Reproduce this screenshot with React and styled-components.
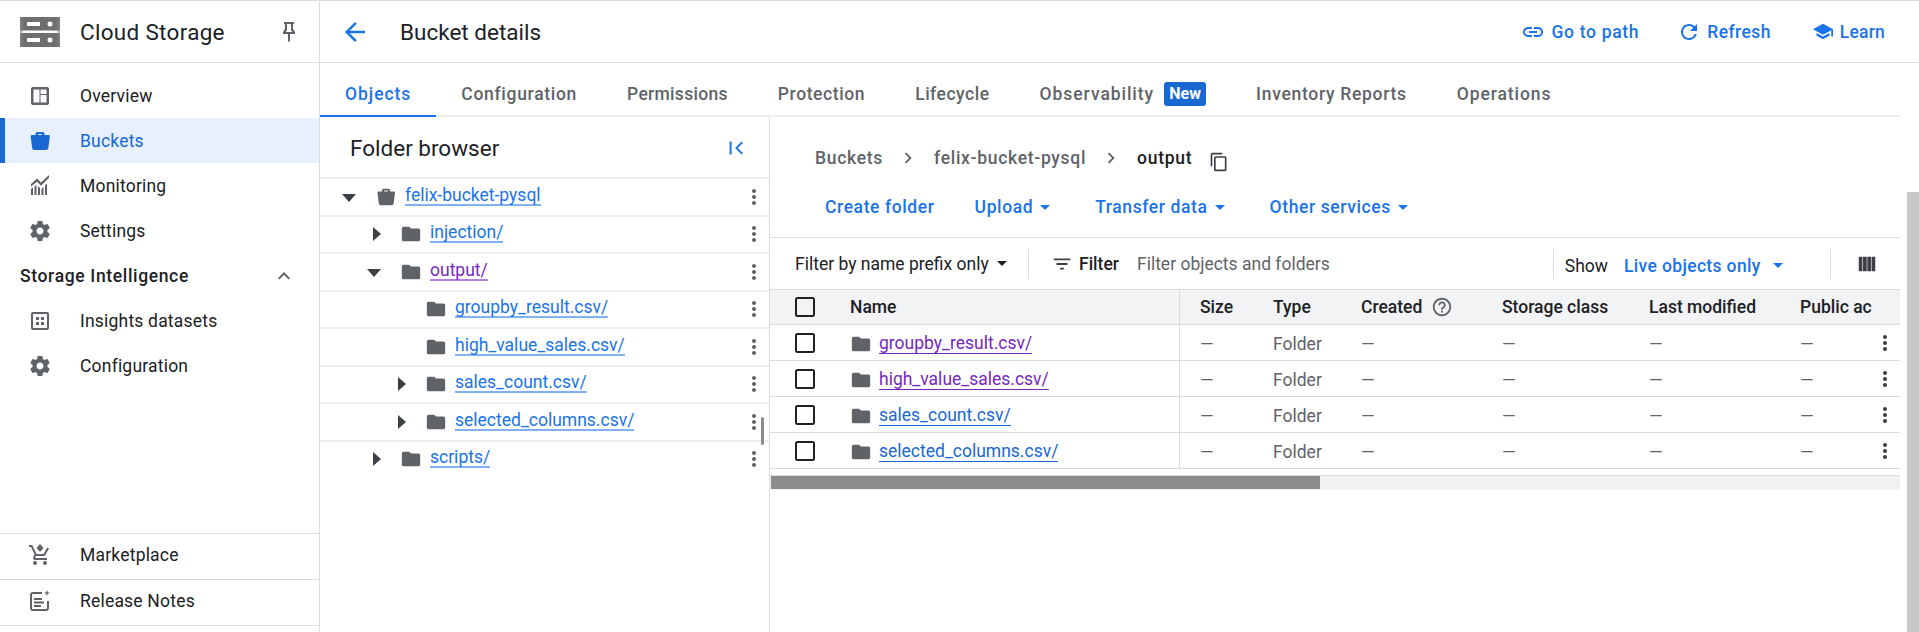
import styled, { createGlobalStyle } from "styled-components";

const GlobalStyle = createGlobalStyle`
html, body { margin: 0; padding: 0; height: 100%; overflow: hidden; background: #fff; }
body { font-family: Roboto, "Liberation Sans", sans-serif; color: #202124; }
* { box-sizing: border-box; }
`;

const BLUE = "#1a73e8";
const GREY = "#5f6368";
const LINE = "#dadce0";

const Icon = ({ d, size = 24, color = "currentColor" }) => (
    <svg width={size} height={size} viewBox="0 0 24 24" fill={color} style={{ flex: "none", display: "block" }}>
        <path d={d} />
    </svg>
);

const paths = {
    dashboard: "M19 3H5c-1.1 0-2 .9-2 2v14c0 1.1.9 2 2 2h14c1.1 0 2-.9 2-2V5c0-1.1-.9-2-2-2zM5.5 18.5v-13h6v13h-6zm7 0V11h6v7.5h-6zm0-8.5V5.5h6V10h-6z",
    bucket: "M7.5 6V5c0-1.1.9-2 2-2h5c1.1 0 2 .9 2 2v1h4c.8 0 1.4.7 1.3 1.5l-1.4 11.2c-.2 1.3-1.2 2.3-2.5 2.3H6.6c-1.3 0-2.3-1-2.5-2.3L2.7 7.5C2.6 6.7 3.2 6 4 6h3.5zm2.5 0h4V5h-4v1z",
    monitoring: "M3 21v-6l2-1.5V21H3zm3.5 0v-8.5l2-1.5v10h-2zm3.5 0v-9l2 2v7h-2zm3.5 0v-6l2-2v8h-2zm3.5 0V11.5l2-2V21h-2zM3 12.5V10l6-5.5 4 4L21 1v2.8l-8 8-4-4-6 4.700z",
    gear: "M19.43 12.98c.04-.32.07-.64.07-.98s-.03-.66-.07-.98l2.11-1.65c.19-.15.24-.42.12-.64l-2-3.46c-.12-.22-.39-.3-.61-.22l-2.49 1c-.52-.4-1.08-.73-1.69-.98l-.38-2.65A.488.488 0 0014 2h-4c-.25 0-.46.18-.49.42l-.38 2.65c-.61.25-1.17.59-1.69.98l-2.49-1c-.23-.09-.49 0-.61.22l-2 3.46c-.13.22-.07.49.12.64l2.11 1.65c-.04.32-.07.65-.07.98s.03.66.07.98l-2.11 1.65c-.19.15-.24.42-.12.64l2 3.46c.12.22.39.3.61.22l2.49-1c.52.4 1.08.73 1.69.98l.38 2.65c.03.24.24.42.49.42h4c.25 0 .46-.18.49-.42l.38-2.65c.61-.25 1.17-.59 1.69-.98l2.49 1c.23.09.49 0 .61-.22l2-3.46c.12-.22.07-.49-.12-.64l-2.11-1.65zM12 15.5c-1.93 0-3.5-1.57-3.5-3.5s1.57-3.5 3.5-3.5 3.5 1.57 3.5 3.5-1.57 3.5-3.5 3.5z",
    insights: "M19 3H5c-1.1 0-2 .9-2 2v14c0 1.1.9 2 2 2h14c1.1 0 2-.9 2-2V5c0-1.1-.9-2-2-2zm0 16H5V5h14v14zM8 8h3v3H8V8zm5 0h3v3h-3V8zm-5 5h3v3H8v-3zm5 0h3v3h-3v-3z",
    cart: "M15.55 13c.75 0 1.41-.41 1.75-1.03L21 5.5l-1.75-1-3.67 6.5H8.53L4.27 2H1v2h2l3.6 7.59-1.35 2.44C4.52 15.37 5.48 17 7 17h12v-2H7l1.1-2h7.45zM7 18a2 2 0 100 4 2 2 0 000-4zm10 0a2 2 0 100 4 2 2 0 000-4zM12 1L8.5 5l3.5 4 3.5-4L12 1z",
    notes: "M19 12v7c0 .6-.4 1-1 1H5c-.6 0-1-.4-1-1V6c0-.6.4-1 1-1h9V3H5C3.3 3 2 4.3 2 6v13c0 1.7 1.3 3 3 3h13c1.7 0 3-1.3 3-3v-7h-2zM6 9h8v2H6V9zm0 3.5h10v2H6v-2zM6 16h7v2H6v-2zM19 1l.8 2.2L22 4l-2.2.8L19 7l-.8-2.2L16 4l2.2-.8L19 1z",
    pin: "M16 9V4h1V2H7v2h1v5l-2 3v2h5v7l1 1 1-1v-7h5v-2l-2-3zm-7.2 3L10 10.2V4h4v6.2l1.2 1.8H8.8z",
    up: "M7.41 15.41L12 10.83l4.59 4.58L18 14l-6-6-6 6z",
    back: "M20 11H7.83l5.59-5.59L12 4l-8 8 8 8 1.41-1.41L7.83 13H20v-2z",
    link: "M3.9 12c0-1.71 1.39-3.1 3.1-3.1h4V7H7c-2.76 0-5 2.24-5 5s2.24 5 5 5h4v-1.9H7c-1.71 0-3.1-1.39-3.1-3.1zM8 13h8v-2H8v2zm9-6h-4v1.9h4c1.71 0 3.1 1.39 3.1 3.1s-1.39 3.1-3.1 3.1h-4V17h4c2.76 0 5-2.24 5-5s-2.24-5-5-5z",
    refresh: "M17.65 6.35A7.958 7.958 0 0012 4c-4.42 0-7.99 3.58-7.99 8s3.57 8 7.99 8c3.73 0 6.84-2.55 7.73-6h-2.08A5.99 5.99 0 0112 18c-3.31 0-6-2.69-6-6s2.69-6 6-6c1.66 0 3.14.69 4.22 1.78L13 11h7V4l-2.35 2.35z",
    school: "M5 13.18v2.81L12 20l7-4.01v-2.81L12 17l-7-3.82zM12 3L1 9l11 6 9-4.91V17h2V9L12 3z",
    collapse: "M5 5h2.2v14H5V5zm14.5 1.5L13.9 12l5.6 5.5-1.5 1.5-7-7 7-7 1.5 1.5z",
    folder: "M10 4H4c-1.1 0-1.99.9-1.99 2L2 18c0 1.1.9 2 2 2h16c1.1 0 2-.9 2-2V8c0-1.1-.9-2-2-2h-8l-2-2z",
    kebab: "M12 8c1.1 0 2-.9 2-2s-.9-2-2-2-2 .9-2 2 .9 2 2 2zm0 2c-1.1 0-2 .9-2 2s.9 2 2 2 2-.9 2-2-.9-2-2-2zm0 6c-1.1 0-2 .9-2 2s.9 2 2 2 2-.9 2-2-.9-2-2-2z",
    chevron: "M10 6L8.59 7.41 13.17 12l-4.58 4.59L10 18l6-6z",
    copy: "M16 1H4c-1.1 0-2 .9-2 2v14h2V3h12V1zm3 4H8c-1.1 0-2 .9-2 2v14c0 1.1.9 2 2 2h11c1.1 0 2-.9 2-2V7c0-1.1-.9-2-2-2zm0 16H8V7h11v14z",
    filter: "M10 18h4v-2h-4v2zM3 6v2h18V6H3zm3 7h12v-2H6v2z",
    columns: "M3 4h4v16H3V4zm4.67 0h4v16h-4V4zm4.66 0h4v16h-4V4zM17 4h4v16h-4V4z",
    help: "M11 18h2v-2h-2v2zm1-16C6.48 2 2 6.48 2 12s4.48 10 10 10 10-4.48 10-10S17.52 2 12 2zm0 18c-4.41 0-8-3.59-8-8s3.59-8 8-8 8 3.59 8 8-3.59 8-8 8zm0-14c-2.21 0-4 1.79-4 4h2c0-1.1.9-2 2-2s2 .9 2 2c0 2-3 1.75-3 5h2c0-2.25 3-2.5 3-5 0-2.21-1.79-4-4-4z",
};

const Page = styled.div`
width: 1919px;
height: 632px;
border-top: 1px solid ${LINE};
display: flex;
overflow: hidden;
position: relative;
`;

const Sidebar = styled.aside`
width: 320px;
flex: none;
border-right: 1px solid ${LINE};
display: flex;
flex-direction: column;
`;

const Brand = styled.div`
height: 62px;
border-bottom: 1px solid ${LINE};
display: flex;
align-items: center;
padding: 0 18px 0 20px;
font-size: 22.5px;
letter-spacing: .3px;
flex: none;
`;

const BrandName = styled.span`
margin-left: 20px;
flex: 1;
`;

const PinButton = styled.span`
color: ${GREY};
display: flex;
`;

const Nav = styled.nav`
padding-top: 10px;
flex: 1;
`;

const NavItem = styled.div`
height: 45px;
display: flex;
align-items: center;
padding-left: ${p => (p.$active ? "23px" : "28px")};
border-left: ${p => (p.$active ? "5px solid #1967d2" : "none")};
background: ${p => (p.$active ? "#e8f0fe" : "transparent")};
color: ${p => (p.$active ? "#1967d2" : "#202124")};
font-size: 17.5px;
letter-spacing: .2px;
svg { color: ${p => (p.$active ? "#1967d2" : GREY)}; margin-right: 28px; }
`;

const NavGroup = styled.div`
height: 45px;
display: flex;
align-items: center;
justify-content: space-between;
padding: 0 23px 0 20px;
font-size: 17.5px;
font-weight: 500;
letter-spacing: .65px;
svg { color: ${GREY}; }
`;

const FooterItem = styled(NavItem)`
height: 46px;
padding-bottom: 4px;
border-top: 1px solid ${LINE};
flex: none;
`;

const FooterEnd = styled.div`
height: 7px;
border-top: 1px solid ${LINE};
flex: none;
`;

const Main = styled.main`
flex: 1;
min-width: 0;
display: flex;
flex-direction: column;
`;

const TopBar = styled.header`
height: 62px;
flex: none;
border-bottom: 1px solid ${LINE};
display: flex;
align-items: center;
padding: 0 34px 0 20px;
`;

const BackButton = styled.span`
color: ${BLUE};
display: flex;
margin-right: 30px;
`;

const PageTitle = styled.h1`
margin: 0;
font-size: 22.5px;
font-weight: 400;
flex: 1;
`;

const TopAction = styled.span`
display: flex;
align-items: center;
gap: 6px;
color: ${BLUE};
font-size: 17.5px;
font-weight: 500;
letter-spacing: ${p => p.$spacing}px;
margin-left: ${p => p.$gap}px;
`;

const Content = styled.div`
width: 1580px;
flex: 1;
display: flex;
flex-direction: column;
min-height: 0;
`;

const Tabs = styled.div`
height: 54px;
flex: none;
display: flex;
border-bottom: 2px solid #eeeeee;
`;

const Tab = styled.div`
padding: 10px 25px 0;
display: flex;
align-items: center;
gap: 10px;
font-size: 17.5px;
font-weight: 500;
letter-spacing: ${p => p.$spacing}px;
color: ${p => (p.$active ? BLUE : GREY)};
margin-bottom: -2px;
border-bottom: 2px solid ${p => (p.$active ? BLUE : "transparent")};
`;

const Badge = styled.span`
background: #1967d2;
color: #fff;
font-size: 16px;
font-weight: 700;
letter-spacing: 0;
line-height: 24px;
width: 42px;
text-align: center;
border-radius: 3px;
`;

const Split = styled.div`
flex: 1;
display: flex;
min-height: 0;
`;

const Browser = styled.section`
width: 450px;
flex: none;
border-right: 1px solid ${LINE};
position: relative;
`;

const BrowserHead = styled.div`
height: 60px;
display: flex;
align-items: center;
justify-content: space-between;
padding: 2px 22px 0 30px;
font-size: 22.5px;
color: #202124;
svg { color: ${BLUE}; }
`;

const TreeRow = styled.div`
height: 37.5px;
border-top: 2px solid #eeeeee;
display: flex;
align-items: center;
padding-left: ${p => 22 + p.$depth * 25}px;
padding-right: 3px;
&:last-of-type { border-bottom: 2px solid #eeeeee; height: 39.5px; }
`;

const Caret = styled.span`
width: 35px;
height: 20px;
flex: none;
display: flex;
align-items: center;
&::before {
    content: "";
    display: ${p => (p.$dir ? "block" : "none")};
    margin-left: ${p => (p.$dir === "right" ? "6px" : "0")};
    margin-top: ${p => (p.$dir === "right" ? "0" : "3px")};
    border-style: solid;
    border-color: transparent;
    border-width: ${p => (p.$dir === "right" ? "7.5px 0 7.5px 8px" : "8px 7.5px 0 7.5px")};
    border-left-color: ${p => (p.$dir === "right" ? "#3c4043" : "transparent")};
    border-top-color: ${p => (p.$dir === "right" ? "transparent" : "#3c4043")};
}
`;

const FolderSlot = styled.span`
width: 28px;
flex: none;
color: ${GREY};
display: flex;
svg { margin-left: -2px; }
`;

const TreeLink = styled.a`
font-size: 17.5px;
color: ${p => (p.$visited ? "#7627bb" : BLUE)};
border-bottom: 2px solid ${p => (p.$visited ? "#b57ede" : "#82b1f1")};
line-height: 18px;
margin-bottom: 2px;
`;

const RowMenu = styled.span`
margin-left: auto;
color: ${GREY};
display: flex;
`;

const TreeScroll = styled.div`
position: absolute;
right: 5px;
top: 300px;
width: 3px;
height: 28px;
background: #8a8d91;
border-radius: 2px;
`;

const Objects = styled.section`
flex: 1;
min-width: 0;
display: flex;
flex-direction: column;
`;

const Crumbs = styled.div`
height: 60px;
padding: 22px 0 0 45px;
display: flex;
align-items: center;
font-size: 17.5px;
font-weight: 500;
letter-spacing: .7px;
color: ${GREY};
flex: none;
`;

const CrumbArrow = styled.span`
margin: 0 15px 0 14px;
color: ${GREY};
display: flex;
`;

const CrumbCurrent = styled.span`
color: #202124;
`;

const CopyButton = styled.span`
color: #3c4043;
display: flex;
margin: 8px 0 0 17px;
`;

const Actions = styled.div`
height: 61px;
flex: none;
display: flex;
align-items: center;
padding-left: 55px;
gap: 40px;
border-bottom: 1px solid ${LINE};
`;

const ActionLink = styled.span`
color: ${BLUE};
font-size: 17.5px;
font-weight: 500;
letter-spacing: .6px;
display: flex;
align-items: center;
gap: 7px;
`;

const DropCaret = styled.i`
display: block;
border-style: solid;
border-color: ${p => p.$color || BLUE} transparent transparent transparent;
border-width: 5.5px 5.5px 0 5.5px;
margin-right: ${p => (p.$tail ? "5px" : "0")};
`;

const FilterBar = styled.div`
height: 51px;
flex: none;
display: flex;
align-items: center;
padding: 0 22px 0 25px;
font-size: 17.5px;
`;

const PrefixSelect = styled.span`
display: flex;
align-items: center;
gap: 8px;
color: #202124;
width: 233px;
`;

const Divider = styled.span`
width: 1px;
height: 30px;
background: ${LINE};
flex: none;
`;

const FilterButton = styled.span`
display: flex;
align-items: center;
gap: 6px;
font-weight: 500;
margin-left: 22px;
svg { color: #3c4043; }
`;

const FilterHint = styled.span`
color: ${GREY};
margin-left: 18px;
flex: 1;
`;

const ShowLabel = styled.span`
margin: 4px 0 0 11px;
`;

const LiveSelect = styled.span`
display: flex;
align-items: center;
gap: 12px;
color: ${BLUE};
font-weight: 500;
letter-spacing: .35px;
margin: 4px 0 0 16px;
width: 206px;
`;

const ColumnsButton = styled.span`
margin-left: 25px;
color: #3c4043;
display: flex;
`;

const Table = styled.div`
flex: none;
font-size: 17.5px;
`;

const HeadRow = styled.div`
height: 36px;
display: grid;
grid-template-columns: 45px 364px 1px 20px 73px 88px 141px 147px 151px 70px;
align-items: center;
background: #f1f3f4;
border-top: 1px solid ${LINE};
border-bottom: 1px solid ${LINE};
font-weight: 500;
color: #202124;
`;

const BodyRow = styled(HeadRow)`
background: #fff;
border-top: none;
font-weight: 400;
color: ${GREY};
`;

const Cell = styled.span`
white-space: nowrap;
min-width: 0;
display: flex;
align-items: center;
padding-top: ${p => (p.$body ? "2px" : "0")};
`;

const HelpCell = styled(Cell)`
gap: 9px;
`;

const CheckCell = styled.span`
display: flex;
justify-content: flex-end;
`;

const Checkbox = styled.span`
width: 20px;
height: 20px;
border: 2px solid #202124;
border-radius: 2.5px;
display: block;
`;

const Rule = styled.span`
align-self: stretch;
background: ${LINE};
`;

const NameCell = styled(Cell)`
gap: 7px;
padding-left: 35px;
`;

const TableLink = styled.a`
color: ${p => (p.$visited ? "#7627bb" : "#1967d2")};
border-bottom: 1px solid currentColor;
line-height: 20px;
`;

const RowKebab = styled.span`
position: absolute;
right: 3px;
color: #3c4043;
display: flex;
`;

const RowWrap = styled.div`
position: relative;
display: flex;
flex-direction: column;
justify-content: center;
`;

const HScroll = styled.div`
margin-top: 6px;
height: 15px;
border-top: 1px solid ${LINE};
background: #f1f1f1;
`;

const HThumb = styled.div`
width: 549px;
height: 13px;
margin-left: 1px;
background: #8c8c8c;
`;

const PageScroll = styled.div`
position: absolute;
right: 0;
top: 191px;
bottom: 0;
width: 12px;
background: #c8c8c8;
`;

const tree = [
    { name: "felix-bucket-pysql", depth: 0, caret: "down", bucket: true },
    { name: "injection/", depth: 1, caret: "right" },
    { name: "output/", depth: 1, caret: "down", visited: true },
    { name: "groupby_result.csv/", depth: 2 },
    { name: "high_value_sales.csv/", depth: 2 },
    { name: "sales_count.csv/", depth: 2, caret: "right" },
    { name: "selected_columns.csv/", depth: 2, caret: "right" },
    { name: "scripts/", depth: 1, caret: "right" },
];

const rows = [
    { name: "groupby_result.csv/", visited: true },
    { name: "high_value_sales.csv/", visited: true },
    { name: "sales_count.csv/" },
    { name: "selected_columns.csv/" },
];

const tabs = [
    { name: "Objects", spacing: 0.95 },
    { name: "Configuration", spacing: 0.7 },
    { name: "Permissions", spacing: 0.3 },
    { name: "Protection", spacing: 0.6 },
    { name: "Lifecycle", spacing: 0.5 },
    { name: "Observability", spacing: 0.95 },
    { name: "Inventory Reports", spacing: 0.7 },
    { name: "Operations", spacing: 0.9 },
];

export default function App() {
    return (
        <Page>
            <GlobalStyle />
            <Sidebar>
                <Brand>
                    <svg width="40" height="30" viewBox="0 0 40 30" style={{ flex: "none" }}>
                        <rect x="0" y="0" width="40" height="13.5" fill="#6e6e6e" />
                        <rect x="0" y="16" width="40" height="14" fill="#6e6e6e" />
                        <rect x="0" y="0" width="3" height="30" fill="#8a8a8a" opacity=".5" />
                        <rect x="37" y="0" width="3" height="30" fill="#8a8a8a" opacity=".5" />
                        <rect x="7" y="5" width="13" height="4" fill="#fff" />
                        <rect x="7" y="21" width="13" height="4" fill="#fff" />
                        <circle cx="30" cy="7" r="2.5" fill="#fff" />
                        <circle cx="30" cy="23" r="2.5" fill="#fff" />
                    </svg>
                    <BrandName>Cloud Storage</BrandName>
                    <PinButton><Icon d={paths.pin} /></PinButton>
                </Brand>
                <Nav>
                    <NavItem><Icon d={paths.dashboard} />Overview</NavItem>
                    <NavItem $active><Icon d={paths.bucket} />Buckets</NavItem>
                    <NavItem><Icon d={paths.monitoring} />Monitoring</NavItem>
                    <NavItem><Icon d={paths.gear} />Settings</NavItem>
                    <NavGroup>Storage Intelligence<Icon d={paths.up} /></NavGroup>
                    <NavItem><Icon d={paths.insights} />Insights datasets</NavItem>
                    <NavItem><Icon d={paths.gear} />Configuration</NavItem>
                </Nav>
                <FooterItem><Icon d={paths.cart} />Marketplace</FooterItem>
                <FooterItem><Icon d={paths.notes} />Release Notes</FooterItem>
                <FooterEnd />
            </Sidebar>
            <Main>
                <TopBar>
                    <BackButton><Icon d={paths.back} size={30} /></BackButton>
                    <PageTitle>Bucket details</PageTitle>
                    <TopAction $spacing={0.7} $gap={41}><Icon d={paths.link} />Go to path</TopAction>
                    <TopAction $spacing={0.4} $gap={38}><Icon d={paths.refresh} />Refresh</TopAction>
                    <TopAction $spacing={0.2} $gap={41}><Icon d={paths.school} size={22} />Learn</TopAction>
                </TopBar>
                <Content>
                    <Tabs>
                        {tabs.map((tab, i) => (
                            <Tab key={tab.name} $active={i === 0} $spacing={tab.spacing}>
                                {tab.name}
                                {tab.name === "Observability" && <Badge>New</Badge>}
                            </Tab>
                        ))}
                    </Tabs>
                    <Split>
                        <Browser>
                            <BrowserHead>Folder browser<Icon d={paths.collapse} size={22} /></BrowserHead>
                            {tree.map(item => (
                                <TreeRow key={item.name} $depth={item.depth}>
                                    <Caret $dir={item.caret} />
                                    <FolderSlot><Icon d={item.bucket ? paths.bucket : paths.folder} size={22} /></FolderSlot>
                                    <TreeLink $visited={item.visited}>{item.name}</TreeLink>
                                    <RowMenu><Icon d={paths.kebab} /></RowMenu>
                                </TreeRow>
                            ))}
                            <TreeScroll />
                        </Browser>
                        <Objects>
                            <Crumbs>
                                Buckets
                                <CrumbArrow><Icon d={paths.chevron} size={22} /></CrumbArrow>
                                felix-bucket-pysql
                                <CrumbArrow><Icon d={paths.chevron} size={22} /></CrumbArrow>
                                <CrumbCurrent>output</CrumbCurrent>
                                <CopyButton><Icon d={paths.copy} size={20} /></CopyButton>
                            </Crumbs>
                            <Actions>
                                <ActionLink>Create folder</ActionLink>
                                <ActionLink>Upload<DropCaret $tail /></ActionLink>
                                <ActionLink>Transfer data<DropCaret $tail /></ActionLink>
                                <ActionLink>Other services<DropCaret $tail /></ActionLink>
                            </Actions>
                            <FilterBar>
                                <PrefixSelect>Filter by name prefix only<DropCaret $color="#202124" /></PrefixSelect>
                                <Divider />
                                <FilterButton><Icon d={paths.filter} size={22} />Filter</FilterButton>
                                <FilterHint>Filter objects and folders</FilterHint>
                                <Divider />
                                <ShowLabel>Show</ShowLabel>
                                <LiveSelect>Live objects only<DropCaret /></LiveSelect>
                                <Divider />
                                <ColumnsButton><Icon d={paths.columns} size={22} /></ColumnsButton>
                            </FilterBar>
                            <Table>
                                <HeadRow>
                                    <CheckCell><Checkbox /></CheckCell>
                                    <NameCell>Name</NameCell>
                                    <Rule />
                                    <span />
                                    <Cell>Size</Cell>
                                    <Cell>Type</Cell>
                                    <HelpCell>Created<Icon d={paths.help} size={22} color={GREY} /></HelpCell>
                                    <Cell>Storage class</Cell>
                                    <Cell>Last modified</Cell>
                                    <Cell>Public ac</Cell>
                                </HeadRow>
                                {rows.map(row => (
                                    <RowWrap key={row.name}>
                                        <BodyRow>
                                            <CheckCell><Checkbox /></CheckCell>
                                            <NameCell $body>
                                                <Icon d={paths.folder} size={22} />
                                                <TableLink $visited={row.visited}>{row.name}</TableLink>
                                            </NameCell>
                                            <Rule />
                                            <span />
                                            <Cell $body>—</Cell>
                                            <Cell $body>Folder</Cell>
                                            <Cell $body>—</Cell>
                                            <Cell $body>—</Cell>
                                            <Cell $body>—</Cell>
                                            <Cell $body>—</Cell>
                                        </BodyRow>
                                        <RowKebab><Icon d={paths.kebab} /></RowKebab>
                                    </RowWrap>
                                ))}
                            </Table>
                            <HScroll><HThumb /></HScroll>
                        </Objects>
                    </Split>
                </Content>
            </Main>
            <PageScroll />
        </Page>
    );
}
